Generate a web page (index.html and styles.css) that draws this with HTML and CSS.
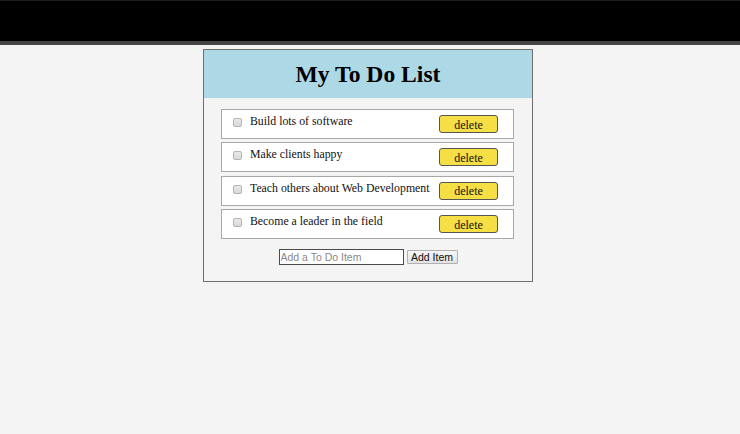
FILE: index.html
```html
<!DOCTYPE html>
<html>
<head>
<meta charset="utf-8">
<link rel="stylesheet" href="styles.css">
</head>
<body>
<div class="topbar"></div>
<div class="card">
  <div class="card-head"><h1 class="title">My To Do List</h1></div>
  <ul class="list">
    <li class="item"><span class="check"></span><span class="label">Build lots of software</span><button class="del">delete</button></li>
    <li class="item"><span class="check"></span><span class="label">Make clients happy</span><button class="del">delete</button></li>
    <li class="item"><span class="check"></span><span class="label">Teach others about Web Development</span><button class="del">delete</button></li>
    <li class="item"><span class="check"></span><span class="label">Become a leader in the field</span><button class="del">delete</button></li>
  </ul>
  <div class="add-row">
    <input class="add-input" type="text" placeholder="Add a To Do Item">
    <button class="add-btn">Add Item</button>
  </div>
</div>
</body>
</html>
```
FILE: styles.css
```css
html, body {
  margin: 0;
  padding: 0;
  background: #f4f4f4;
  font-family: "Liberation Serif", "Times New Roman", serif;
}
.topbar {
  height: 40px;
  background: #000;
  border-top: 1px solid #1c1c1c;
  border-bottom: 4px solid #454545;
}
.card {
  width: 328px;
  margin: 4px auto 0;
  position: relative;
  left: -2px;
  border: 1px solid #6e6e6e;
  background: #f4f4f4;
  padding-bottom: 16px;
}
.card-head {
  height: 48px;
  background: #add8e6;
  display: flex;
  align-items: center;
  justify-content: center;
}
.title {
  margin: 0;
  font-size: 23.6px;
  font-weight: bold;
  color: #000;
  line-height: 1;
  padding-top: 1px;
}
.list {
  list-style: none;
  margin: 11px 18px 0 17px;
  padding: 0;
  display: flex;
  flex-direction: column;
  gap: 3.4px;
}
.item {
  box-sizing: border-box;
  height: 30px;
  background: #fff;
  border: 1px solid #a8a8a8;
  display: flex;
  align-items: flex-start;
  padding: 0 15px 0 11px;
}
.check {
  box-sizing: border-box;
  width: 9px;
  height: 9px;
  margin-top: 8px;
  border: 1px solid #b4b4b4;
  border-radius: 2px;
  background: linear-gradient(#e9e9e9, #d8d8d8);
  flex: none;
}
.label {
  margin-left: 8px;
  margin-top: 5px;
  font-size: 11.8px;
  color: #111;
  line-height: 13px;
  flex: 1;
}
.del {
  box-sizing: border-box;
  width: 59px;
  height: 18px;
  margin-top: 5px;
  padding: 1px 0 0;
  background: #f6de45;
  border: 1px solid #555;
  border-radius: 3px;
  font-family: "Liberation Serif", "Times New Roman", serif;
  font-size: 12px;
  color: #111;
  line-height: 14px;
  flex: none;
}
.add-row {
  margin-top: 10px;
  display: flex;
  justify-content: center;
  align-items: center;
  gap: 3px;
}
.add-input {
  box-sizing: border-box;
  width: 125px;
  height: 16px;
  margin: 0;
  padding: 0 1px;
  border: 1px solid #4a4a4a;
  background: #fff;
  font-family: "Liberation Sans", Arial, sans-serif;
  font-size: 10.5px;
}
.add-input::placeholder {
  color: #8a8a8a;
}
.add-btn {
  box-sizing: border-box;
  width: 51px;
  height: 14px;
  margin: 0;
  padding: 0;
  border: 1px solid #b0b0b0;
  border-radius: 1px;
  background: linear-gradient(#f6f6f6, #e2e2e2);
  font-family: "Liberation Sans", Arial, sans-serif;
  font-size: 10.5px;
  color: #111;
  line-height: 12px;
}
```
